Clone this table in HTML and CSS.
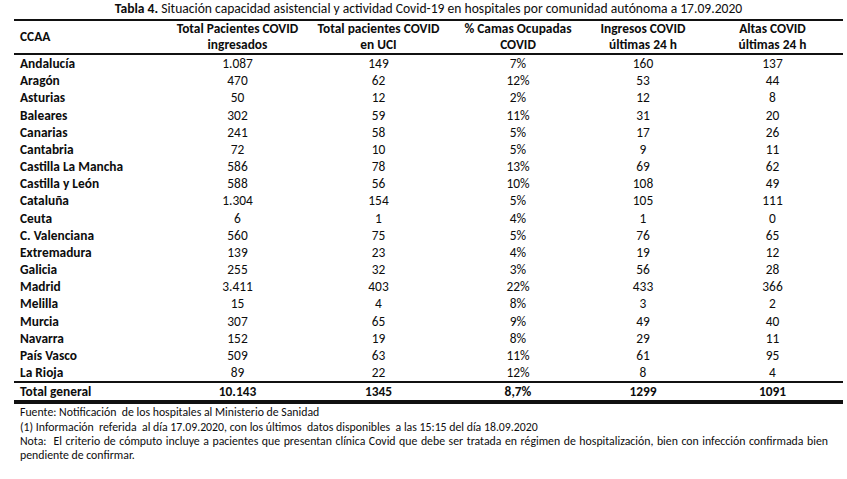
FILE: index.html
```html
<!DOCTYPE html>
<html lang="es">
<head>
<meta charset="utf-8">
<title>Tabla 4</title>
<link rel="stylesheet" href="styles.css">
</head>
<body>
<div class="page">
  <div class="title"><b>Tabla 4.</b> Situación capacidad asistencial y actividad Covid-19 en hospitales por comunidad autónoma a 17.09.2020</div>
  <table class="data">
    <colgroup>
      <col class="c1"><col class="c2"><col class="c3"><col class="c4"><col class="c5"><col class="c6">
    </colgroup>
    <thead>
      <tr>
        <th class="name">CCAA</th>
        <th>Total Pacientes COVID<br>ingresados</th>
        <th>Total pacientes COVID<br>en UCI</th>
        <th>% Camas Ocupadas<br>COVID</th>
        <th>Ingresos COVID<br>últimas 24 h</th>
        <th>Altas COVID<br>últimas 24 h</th>
      </tr>
    </thead>
    <tbody>
      <tr><td class="name">Andalucía</td><td>1.087</td><td>149</td><td>7%</td><td>160</td><td>137</td></tr>
      <tr><td class="name">Aragón</td><td>470</td><td>62</td><td>12%</td><td>53</td><td>44</td></tr>
      <tr><td class="name">Asturias</td><td>50</td><td>12</td><td>2%</td><td>12</td><td>8</td></tr>
      <tr><td class="name">Baleares</td><td>302</td><td>59</td><td>11%</td><td>31</td><td>20</td></tr>
      <tr><td class="name">Canarias</td><td>241</td><td>58</td><td>5%</td><td>17</td><td>26</td></tr>
      <tr><td class="name">Cantabria</td><td>72</td><td>10</td><td>5%</td><td>9</td><td>11</td></tr>
      <tr><td class="name">Castilla La Mancha</td><td>586</td><td>78</td><td>13%</td><td>69</td><td>62</td></tr>
      <tr><td class="name">Castilla y León</td><td>588</td><td>56</td><td>10%</td><td>108</td><td>49</td></tr>
      <tr><td class="name">Cataluña</td><td>1.304</td><td>154</td><td>5%</td><td>105</td><td>111</td></tr>
      <tr><td class="name">Ceuta</td><td>6</td><td>1</td><td>4%</td><td>1</td><td>0</td></tr>
      <tr><td class="name">C. Valenciana</td><td>560</td><td>75</td><td>5%</td><td>76</td><td>65</td></tr>
      <tr><td class="name">Extremadura</td><td>139</td><td>23</td><td>4%</td><td>19</td><td>12</td></tr>
      <tr><td class="name">Galicia</td><td>255</td><td>32</td><td>3%</td><td>56</td><td>28</td></tr>
      <tr><td class="name">Madrid</td><td>3.411</td><td>403</td><td>22%</td><td>433</td><td>366</td></tr>
      <tr><td class="name">Melilla</td><td>15</td><td>4</td><td>8%</td><td>3</td><td>2</td></tr>
      <tr><td class="name">Murcia</td><td>307</td><td>65</td><td>9%</td><td>49</td><td>40</td></tr>
      <tr><td class="name">Navarra</td><td>152</td><td>19</td><td>8%</td><td>29</td><td>11</td></tr>
      <tr><td class="name">País Vasco</td><td>509</td><td>63</td><td>11%</td><td>61</td><td>95</td></tr>
      <tr><td class="name">La Rioja</td><td>89</td><td>22</td><td>12%</td><td>8</td><td>4</td></tr>
    </tbody>
    <tfoot>
      <tr><td class="name">Total general</td><td>10.143</td><td>1345</td><td>8,7%</td><td>1299</td><td>1091</td></tr>
    </tfoot>
  </table>
  <div class="notes">
    <p>Fuente: Notificación&nbsp; de los hospitales al Ministerio de Sanidad</p>
    <p>(1) Información&nbsp; referida&nbsp; al día 17.09.2020, con los últimos&nbsp; datos disponibles&nbsp; a las 15:15 del día 18.09.2020</p>
    <p class="just">Nota:&nbsp; El criterio de cómputo incluye a pacientes que presentan clínica Covid que debe ser tratada en régimen de hospitalización, bien con infección confirmada bien</p>
    <p>pendiente de confirmar.</p>
  </div>
</div>
</body>
</html>
```

FILE: styles.css
```css
html, body {
  margin: 0;
  padding: 0;
  background: #ffffff;
}

body {
  font-family: Carlito, Lato, "Liberation Sans", sans-serif;
  color: #0d0d0d;
}

.page {
  width: 829px;
  padding-left: 14px;
}

.title {
  text-align: center;
  font-size: 13.6px;
  line-height: 16px;
  height: 19px;
  padding-top: 1px;
  box-sizing: border-box;
}

.title b {
  font-weight: 700;
}

.data {
  width: 829px;
  border-collapse: collapse;
  table-layout: fixed;
  font-size: 13.4px;
  font-weight: 700;
}

.c1 { width: 156px; }
.c2 { width: 135px; }
.c3 { width: 147px; }
.c4 { width: 132px; }
.c5 { width: 118px; }
.c6 { width: 141px; }

.data thead tr {
  border-top: 2px solid #111;
  border-bottom: 2px solid #111;
}

.data th {
  font-weight: 700;
  text-align: center;
  line-height: 16px;
  padding: 0;
  height: 32px;
  box-sizing: border-box;
  vertical-align: middle;
}

.data td {
  text-align: center;
  line-height: 17.17px;
  height: 17.17px;
  padding: 0;
  white-space: nowrap;
}

.data tbody td {
  font-weight: 400;
}

.data tbody td.name {
  font-weight: 700;
}

.data .name {
  text-align: left;
  padding-left: 6px;
}

.data tfoot tr {
  border-top: 2px solid #111;
  border-bottom: 4px solid #111;
}

.data tfoot td {
  line-height: 17px;
  height: 17px;
  font-weight: 700;
}

.notes {
  font-size: 11.8px;
  line-height: 14.3px;
  padding-left: 6px;
  padding-top: 1px;
}

.notes p {
  margin: 0;
  white-space: nowrap;
}

.notes p.just {
  white-space: normal;
  width: 808px;
  text-align: justify;
  text-align-last: justify;
}
```
